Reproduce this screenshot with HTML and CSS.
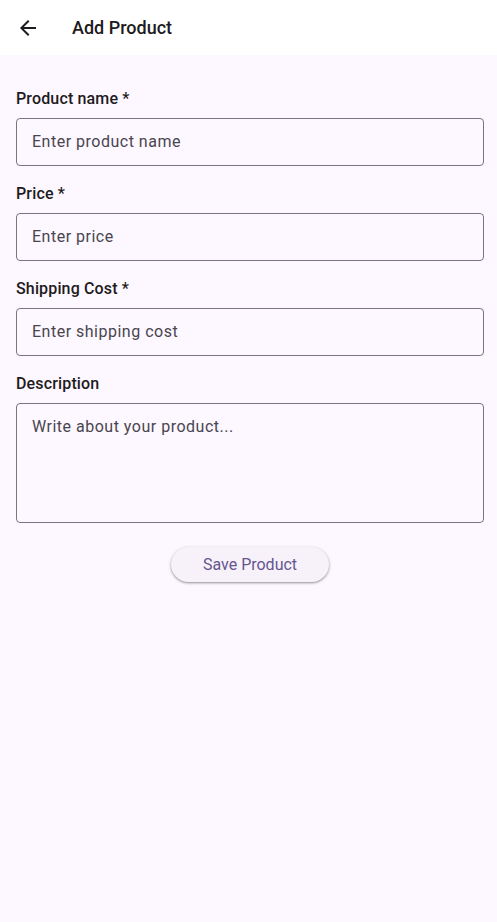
FILE: index.html
```html
<!DOCTYPE html>
<html lang="en">
<head>
    <meta charset="UTF-8">
    <meta name="viewport" content="width=device-width, initial-scale=1.0">
    <title>Add Product</title>
    <link rel="stylesheet" href="styles.css">
</head>
<body>
    <div class="app-bar">
        <button class="back-btn" type="button" aria-label="Back">
            <svg width="24" height="24" viewBox="0 0 24 24"><path d="M20 11H7.83l5.59-5.59L12 4l-8 8 8 8 1.41-1.41L7.83 13H20v-2z" fill="#1d1b20"/></svg>
        </button>
        <h1 class="title">Add Product</h1>
    </div>

    <form class="product-form">
        <div class="field">
            <label for="name">Product name *</label>
            <input type="text" id="name" placeholder="Enter product name">
        </div>
        <div class="field">
            <label for="price">Price *</label>
            <input type="text" id="price" placeholder="Enter price">
        </div>
        <div class="field">
            <label for="shipping">Shipping Cost *</label>
            <input type="text" id="shipping" placeholder="Enter shipping cost">
        </div>
        <div class="field">
            <label for="description">Description</label>
            <textarea id="description" placeholder="Write about your product..."></textarea>
        </div>
        <div class="actions">
            <button type="button" class="save-btn">Save Product</button>
        </div>
    </form>
</body>
</html>
```

FILE: styles.css
```css
body {
    margin: 0;
    font-family: Roboto, sans-serif;
    background-color: #fdf7ff;
    color: #1d1b20;
    min-height: 100vh;
}
.app-bar {
    display: flex;
    align-items: center;
    height: 55px;
    background-color: #fff;
    padding-left: 16px;
}
.back-btn {
    display: flex;
    padding: 0;
    border: none;
    background: none;
    cursor: pointer;
}
.title {
    margin: 0 0 0 32px;
    font-size: 18px;
    font-weight: 500;
    letter-spacing: 0;
}
.product-form {
    display: flex;
    flex-direction: column;
    gap: 18px;
    padding: 34px 13px 0 16px;
}
.field {
    display: flex;
    flex-direction: column;
    gap: 9px;
}
.field label {
    font-size: 16px;
    font-weight: 500;
    line-height: 20px;
    letter-spacing: 0.15px;
}
.field input, .field textarea {
    box-sizing: border-box;
    width: 100%;
    height: 48px;
    margin: 0;
    padding: 0 15px 2px;
    border: 1px solid #79747e;
    border-radius: 4px;
    background: transparent;
    font-family: Roboto, sans-serif;
    font-size: 16px;
    letter-spacing: 0.5px;
    color: #1d1b20;
}
.field textarea {
    height: 120px;
    padding: 12px 15px;
    line-height: 22px;
    resize: none;
}
.field input::placeholder, .field textarea::placeholder {
    color: #49454f;
}
.actions {
    display: flex;
    justify-content: center;
    padding-top: 6px;
}
.save-btn {
    height: 35px;
    padding: 0 32px;
    border: none;
    border-radius: 18px;
    background-color: #f7f2fa;
    color: #65558f;
    font-family: Roboto, sans-serif;
    font-size: 16px;
    box-shadow: 0 1px 2px rgba(0, 0, 0, 0.3), 0 1px 3px 1px rgba(0, 0, 0, 0.1);
    cursor: pointer;
}
```
